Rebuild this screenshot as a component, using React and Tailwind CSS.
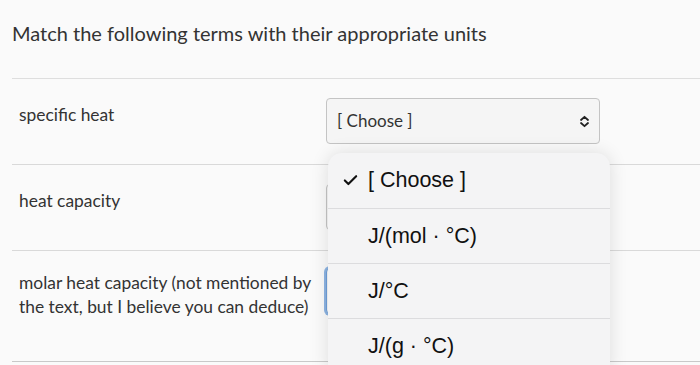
import { Check } from "lucide-react";

const ROWS = [
  { label: "specific heat", h: "h-[86px]" },
  { label: "heat capacity", h: "h-[86px]" },
  {
    label: "molar heat capacity (not mentioned by the text, but I believe you can deduce)",
    h: "h-[111px]",
    focused: true,
  },
];

const OPTIONS = ["[ Choose ]", "J/(mol · °C)", "J/°C", "J/(g · °C)"];

function UpDown() {
  return (
    <svg width="11" height="13" viewBox="0 0 11 13" fill="none">
      <path d="M2 5 L5.5 1.8 L9 5" stroke="#222" strokeWidth="1.8" strokeLinecap="round" strokeLinejoin="round" />
      <path d="M2 8 L5.5 11.2 L9 8" stroke="#222" strokeWidth="1.8" strokeLinecap="round" strokeLinejoin="round" />
    </svg>
  );
}

function Select({ focused }) {
  return (
    <div
      className={`flex h-[46px] w-[274px] items-center justify-between rounded-[4px] border bg-[#f5f5f5] pl-[10px] pr-[9px] text-[17px] text-[#333] ${
        focused ? "border-[#6f9fd8] ring-2 ring-[#8db4e2]" : "border-[#c4c4c4]"
      }`}
    >
      <span>[ Choose ]</span>
      <UpDown />
    </div>
  );
}

export default function App() {
  return (
    <div
      className="relative h-[365px] w-[700px] overflow-hidden bg-[#fafafa] text-[#2d3b45]"
      style={{ fontFamily: "Lato, 'Open Sans', sans-serif" }}
    >
      <div className="pl-[12px]">
        <h1 className="flex h-[78px] items-start pt-[20px] text-[20px] leading-[26px] font-normal text-[#333]">
          Match the following terms with their appropriate units
        </h1>
        {ROWS.map((row, i) => (
          <div
            key={i}
            className={`flex ${row.h} items-start border-t ${
              i === 0 ? "border-[#dedede]" : "border-[#d9d9d9]"
            } pl-[7px]`}
          >
            <div className={`w-[307px] pr-[8px] text-[17.4px] leading-[24px] text-[#333] ${row.focused ? "pt-[20px]" : "pt-[24px]"}`}>
              {row.label}
            </div>
            <div className={row.focused ? "pt-[17px]" : "pt-[19px]"}>
              <Select focused={row.focused} />
            </div>
          </div>
        ))}
        <div className="border-t border-[#c9c9c9]" />
      </div>

      <div
        className="absolute left-[328px] top-[153px] w-[282px] overflow-hidden rounded-t-[14px] bg-[#f4f4f5] shadow-[0_0_18px_rgba(0,0,0,0.12)]"
        style={{ fontFamily: "'Liberation Sans', Arial, sans-serif" }}
      >
        {OPTIONS.map((opt, i) => (
          <div
            key={opt}
            className={`relative flex h-[55px] items-center pl-[40px] text-[21.5px] text-[#111] ${
              i > 0 ? "border-t border-[#dcdcde]" : ""
            }`}
          >
            {i === 0 && (
              <Check className="absolute left-[14px] top-[19px] h-[17px] w-[17px]" strokeWidth={3} color="#111" />
            )}
            {opt}
          </div>
        ))}
      </div>
    </div>
  );
}
